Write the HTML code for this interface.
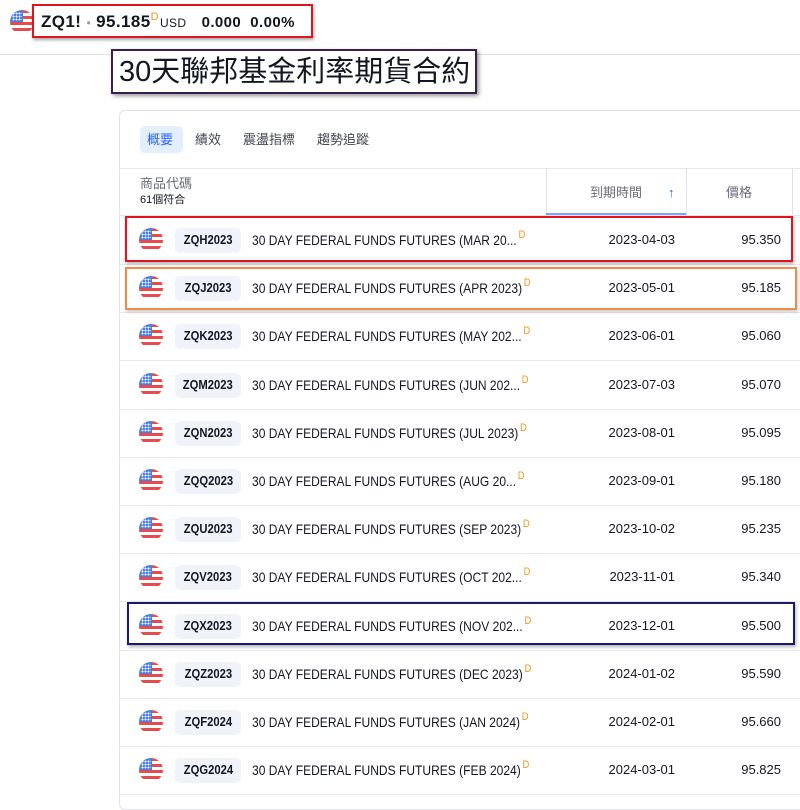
<!DOCTYPE html>
<html><head><meta charset="utf-8"><style>
*{margin:0;padding:0;box-sizing:border-box}
body{width:800px;height:794px;background:#fff;position:relative;overflow:hidden;font-family:"Liberation Sans","Noto Sans CJK TC",sans-serif;color:#131722}
.a{position:absolute;white-space:nowrap}
.flag{position:absolute;width:24px;height:24px;border-radius:50%;overflow:hidden;
background:linear-gradient(#4a7fe0,#4a7fe0) 0 0/13px 12px no-repeat,
repeating-linear-gradient(#e84b4b 0 3px,#fff 3px 6px)}
.flag::before{content:"";position:absolute;left:2px;top:2px;width:10px;height:9px;
background:radial-gradient(circle,#fff 0.8px,transparent 1.1px) 0 0/3px 3px}
.sym{position:absolute;left:175px;width:66px;height:25px;background:#f0f3fa;border-radius:5px;font-size:12.5px;font-weight:bold;line-height:25px;text-align:center;color:#131722}
.sym span{display:inline-block;transform:scaleX(0.9)}
.nm{position:absolute;left:252px;font-size:14px;height:20px;line-height:20px;transform:scaleX(0.86);transform-origin:left center;color:#131722}
.nm b{position:relative;top:-7px;color:#f7931a;font-size:11px;font-weight:normal;margin-left:2px}
.dt{position:absolute;right:125px;font-size:13px;line-height:20px}
.pr{position:absolute;right:19px;font-size:13px;line-height:20px}
.sep{position:absolute;left:119px;right:0;height:1px;background:#e6e8ec}
</style></head><body>

<div class="flag" style="left:10px;top:10px"></div>
<div class="a" style="left:32px;top:4px;width:281px;height:34px;border:2px solid #e0141e;box-shadow:1px 2px 3px rgba(0,0,0,.35)"></div>
<div class="a" style="left:41px;top:11px;font-size:17px;font-weight:bold;line-height:22px;letter-spacing:0.4px">ZQ1! <span style="color:#999;font-weight:normal;font-size:12px">•</span> 95.185<span style="color:#f7931a;font-weight:normal;font-size:11px;position:relative;top:-7px">D</span><span style="font-size:12px;font-weight:normal;margin-left:1px">USD</span> <span style="font-size:15px;margin-left:10px">0.000&nbsp; 0.00%</span></div>
<div class="a" style="left:0;top:54px;width:800px;height:1px;background:#e0e3eb"></div>
<div class="a" style="left:111px;top:49px;width:366px;height:45px;border:2px solid #3b1f4a;box-shadow:2px 2px 4px rgba(0,0,0,.4);background:#fff"></div>
<div class="a" style="left:119px;top:54px;font-size:29px;line-height:36px;color:#131722">30天聯邦基金利率期貨合約</div>

<div class="a" style="left:119px;top:110px;width:700px;height:700px;border:1px solid #e0e3eb;border-radius:6px"></div>
<div class="a" style="left:140px;top:126px;width:43px;height:27px;background:#e3effd;border-radius:5px"></div>
<div class="a" style="left:147px;top:131px;font-size:13px;line-height:17px;color:#2962ff">概要</div>
<div class="a" style="left:195px;top:131px;font-size:13px;line-height:17px;color:#434651">績效</div>
<div class="a" style="left:243px;top:131px;font-size:13px;line-height:17px;color:#434651">震盪指標</div>
<div class="a" style="left:317px;top:131px;font-size:13px;line-height:17px;color:#434651">趨勢追蹤</div>
<div class="sep" style="top:168px"></div>
<div class="a" style="left:140px;top:175px;font-size:13px;line-height:18px;color:#6a6d78">商品代碼</div>
<div class="a" style="left:140px;top:193px;font-size:11px;line-height:14px;color:#131722">61個符合</div>
<div class="a" style="left:546px;top:168px;width:1px;height:47px;background:#e0e3eb"></div>
<div class="a" style="left:686px;top:168px;width:1px;height:47px;background:#e0e3eb"></div>
<div class="a" style="left:792px;top:168px;width:1px;height:47px;background:#e0e3eb"></div>
<div class="a" style="left:546px;top:213px;width:140px;height:2px;background:#2962ff;opacity:.6"></div>
<div class="a" style="left:590px;top:184px;font-size:13px;line-height:18px;color:#6a6d78">到期時間</div>
<div class="a" style="left:668px;top:184px;font-size:13px;line-height:18px;color:#2962ff">↑</div>
<div class="a" style="left:726px;top:184px;font-size:13px;line-height:18px;color:#6a6d78">價格</div>
<div class="sep" style="top:215px"></div>

<div id="rows"></div>
<script>
var d=[["ZQH2023","30 DAY FEDERAL FUNDS FUTURES (MAR 20...","2023-04-03","95.350"],
["ZQJ2023","30 DAY FEDERAL FUNDS FUTURES (APR 2023)","2023-05-01","95.185"],
["ZQK2023","30 DAY FEDERAL FUNDS FUTURES (MAY 202...","2023-06-01","95.060"],
["ZQM2023","30 DAY FEDERAL FUNDS FUTURES (JUN 202...","2023-07-03","95.070"],
["ZQN2023","30 DAY FEDERAL FUNDS FUTURES (JUL 2023)","2023-08-01","95.095"],
["ZQQ2023","30 DAY FEDERAL FUNDS FUTURES (AUG 20...","2023-09-01","95.180"],
["ZQU2023","30 DAY FEDERAL FUNDS FUTURES (SEP 2023)","2023-10-02","95.235"],
["ZQV2023","30 DAY FEDERAL FUNDS FUTURES (OCT 202...","2023-11-01","95.340"],
["ZQX2023","30 DAY FEDERAL FUNDS FUTURES (NOV 202...","2023-12-01","95.500"],
["ZQZ2023","30 DAY FEDERAL FUNDS FUTURES (DEC 2023)","2024-01-02","95.590"],
["ZQF2024","30 DAY FEDERAL FUNDS FUTURES (JAN 2024)","2024-02-01","95.660"],
["ZQG2024","30 DAY FEDERAL FUNDS FUTURES (FEB 2024)","2024-03-01","95.825"]];
var h="";
for(var i=0;i<d.length;i++){var c=240+i*48.2;
h+='<div class="flag" style="left:139px;top:'+(c-12)+'px"></div>';
h+='<div class="sym" style="top:'+(c-12)+'px"><span>'+d[i][0]+'</span></div>';
h+='<div class="nm" style="top:'+(c-10)+'px">'+d[i][1]+'<b>D</b></div>';
h+='<div class="dt" style="top:'+(c-10)+'px">'+d[i][2]+'</div>';
h+='<div class="pr" style="top:'+(c-10)+'px">'+d[i][3]+'</div>';
h+='<div class="sep" style="top:'+(c+24)+'px"></div>';}
document.getElementById("rows").innerHTML=h;
</script>
<div class="a" style="left:125px;top:216px;width:668px;height:46px;border:2px solid #e0141e;box-shadow:1px 2px 3px rgba(0,0,0,.3)"></div>
<div class="a" style="left:125px;top:267px;width:672px;height:43px;border:2px solid #f08a4b;box-shadow:1px 2px 3px rgba(0,0,0,.2)"></div>
<div class="a" style="left:127px;top:602px;width:668px;height:43px;border:2px solid #1a1a6e;box-shadow:1px 2px 3px rgba(0,0,0,.3)"></div>
</body></html>
